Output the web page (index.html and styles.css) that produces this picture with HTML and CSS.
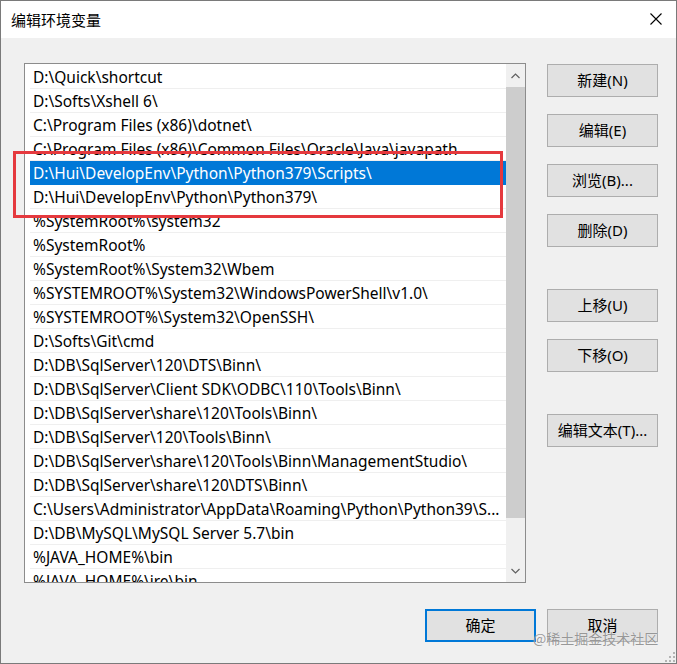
FILE: index.html
```html
<!DOCTYPE html>
<html lang="zh-CN">
<head>
<meta charset="utf-8">
<title>编辑环境变量</title>
<link rel="stylesheet" href="styles.css">
</head>
<body>
<div class="window">
  <div class="titlebar">
    <span class="title">编辑环境变量</span>
    <span class="close">
      <svg width="12" height="12" viewBox="0 0 12 12"><path d="M0.5 0.5 L11.5 11.5 M11.5 0.5 L0.5 11.5" stroke="#000" stroke-width="1.1" fill="none"/></svg>
    </span>
  </div>
  <div class="body">
    <div class="main">
      <div class="listbox">
        <ul class="items">
          <li class="item">D:\Quick\shortcut</li>
          <li class="item">D:\Softs\Xshell 6\</li>
          <li class="item">C:\Program Files (x86)\dotnet\</li>
          <li class="item">C:\Program Files (x86)\Common Files\Oracle\Java\javapath</li>
          <li class="item selected">D:\Hui\DevelopEnv\Python\Python379\Scripts\</li>
          <li class="item">D:\Hui\DevelopEnv\Python\Python379\</li>
          <li class="item">%SystemRoot%\system32</li>
          <li class="item">%SystemRoot%</li>
          <li class="item">%SystemRoot%\System32\Wbem</li>
          <li class="item">%SYSTEMROOT%\System32\WindowsPowerShell\v1.0\</li>
          <li class="item">%SYSTEMROOT%\System32\OpenSSH\</li>
          <li class="item">D:\Softs\Git\cmd</li>
          <li class="item">D:\DB\SqlServer\120\DTS\Binn\</li>
          <li class="item">D:\DB\SqlServer\Client SDK\ODBC\110\Tools\Binn\</li>
          <li class="item">D:\DB\SqlServer\share\120\Tools\Binn\</li>
          <li class="item">D:\DB\SqlServer\120\Tools\Binn\</li>
          <li class="item">D:\DB\SqlServer\share\120\Tools\Binn\ManagementStudio\</li>
          <li class="item">D:\DB\SqlServer\share\120\DTS\Binn\</li>
          <li class="item">C:\Users\Administrator\AppData\Roaming\Python\Python39\S...</li>
          <li class="item">D:\DB\MySQL\MySQL Server 5.7\bin</li>
          <li class="item">%JAVA_HOME%\bin</li>
          <li class="item">%JAVA_HOME%\jre\bin</li>
        </ul>
        <div class="scrollbar">
          <div class="arrow">
            <svg width="9" height="6" viewBox="0 0 9 6"><path d="M0.5 5 L4.5 1 L8.5 5" stroke="#606060" stroke-width="1.2" fill="none"/></svg>
          </div>
          <div class="thumb"></div>
          <div class="track"></div>
          <div class="arrow">
            <svg width="9" height="6" viewBox="0 0 9 6"><path d="M0.5 1 L4.5 5 L8.5 1" stroke="#606060" stroke-width="1.2" fill="none"/></svg>
          </div>
        </div>
      </div>
      <div class="side">
        <button class="btn">新建(N)</button>
        <button class="btn">编辑(E)</button>
        <button class="btn">浏览(B)...</button>
        <button class="btn">删除(D)</button>
        <button class="btn gap-big">上移(U)</button>
        <button class="btn">下移(O)</button>
        <button class="btn gap-big">编辑文本(T)...</button>
      </div>
    </div>
    <div class="footer">
      <button class="btn default">确定</button>
      <button class="btn">取消</button>
    </div>
  </div>
  <div class="redbox"></div>
  <div class="watermark">@稀土掘金技术社区</div>
  <div class="grip">
    <svg width="12" height="12" viewBox="0 0 12 12" fill="#b4b4b4">
      <rect x="9" y="1" width="2" height="2"/>
      <rect x="5" y="5" width="2" height="2"/><rect x="9" y="5" width="2" height="2"/>
      <rect x="1" y="9" width="2" height="2"/><rect x="5" y="9" width="2" height="2"/><rect x="9" y="9" width="2" height="2"/>
    </svg>
  </div>
</div>
</body>
</html>
```
FILE: styles.css
```css
* { box-sizing: border-box; }
html, body { margin: 0; padding: 0; }
body {
  font-family: "Noto Sans", "Noto Sans CJK SC", sans-serif;
  color: #000;
  background: #f0f0f0;
}
.window {
  position: relative;
  width: 677px;
  height: 664px;
  border: 1px solid #7a7a7a;
  display: flex;
  flex-direction: column;
  overflow: hidden;
}
.titlebar {
  height: 37px;
  background: #fff;
  display: flex;
  align-items: center;
  justify-content: space-between;
  padding: 0 14px 0 10px;
  flex: none;
}
.title {
  font-family: "Noto Sans CJK SC", sans-serif;
  font-size: 15px;
  line-height: 20px;
  padding-top: 1px;
}
.close { display: flex; width: 12px; height: 12px; margin-top: -1px; }
.body {
  flex: 1;
  background: #f0f0f0;
  padding: 25px 18px 0 23px;
  display: flex;
  flex-direction: column;
}
.main {
  display: flex;
  gap: 21px;
}
.listbox {
  width: 502px;
  height: 520px;
  border: 1px solid #8c8c8c;
  background: #fff;
  display: flex;
}
.items {
  list-style: none;
  margin: 0;
  padding: 1px 0 0 5px;
  flex: 1;
  overflow: hidden;
  min-width: 0;
}
.item {
  height: 24px;
  line-height: 22px;
  padding-top: 1px;
  border-bottom: 1px solid #efefef;
  padding-left: 3px;
  font-size: 15.5px;
  white-space: nowrap;
  overflow: hidden;
}
.item.selected {
  background: #0078d7;
  color: #fff;
  border-bottom-color: #0078d7;
}
.scrollbar {
  width: 19px;
  background: #f0f0f0;
  display: flex;
  flex-direction: column;
  flex: none;
}
.arrow {
  height: 23px;
  display: flex;
  align-items: center;
  justify-content: center;
  flex: none;
}
.thumb {
  height: 431px;
  background: #cdcdcd;
  flex: none;
}
.track { flex: 1; }
.side {
  display: flex;
  flex-direction: column;
  gap: 17px;
  padding-top: 1px;
}
.btn {
  width: 111px;
  height: 33px;
  background: #e1e1e1;
  border: 1px solid #adadad;
  font-family: "Noto Sans", "Noto Sans CJK SC", sans-serif;
  font-size: 15px;
  color: #000;
  padding: 0 0 2px;
  line-height: 20px;
}
.gap-big { margin-top: 25px; }
.btn.default { border: 2px solid #0078d7; }
.footer {
  display: flex;
  justify-content: flex-end;
  gap: 11px;
  margin-top: 26px;
}
.redbox {
  position: absolute;
  left: 12px;
  top: 150px;
  width: 490px;
  height: 67px;
  border: 3px solid #e5393e;
  pointer-events: none;
}
.watermark {
  position: absolute;
  left: 532px;
  top: 628px;
  font-family: "Noto Sans CJK SC", sans-serif;
  font-size: 14px;
  line-height: 18px;
  color: rgba(120, 120, 120, 0.75);
  text-shadow: 0 0 1px rgba(255,255,255,0.8);
  white-space: nowrap;
}
.grip {
  position: absolute;
  right: 0;
  bottom: 0;
  width: 12px;
  height: 12px;
  display: flex;
}
```
